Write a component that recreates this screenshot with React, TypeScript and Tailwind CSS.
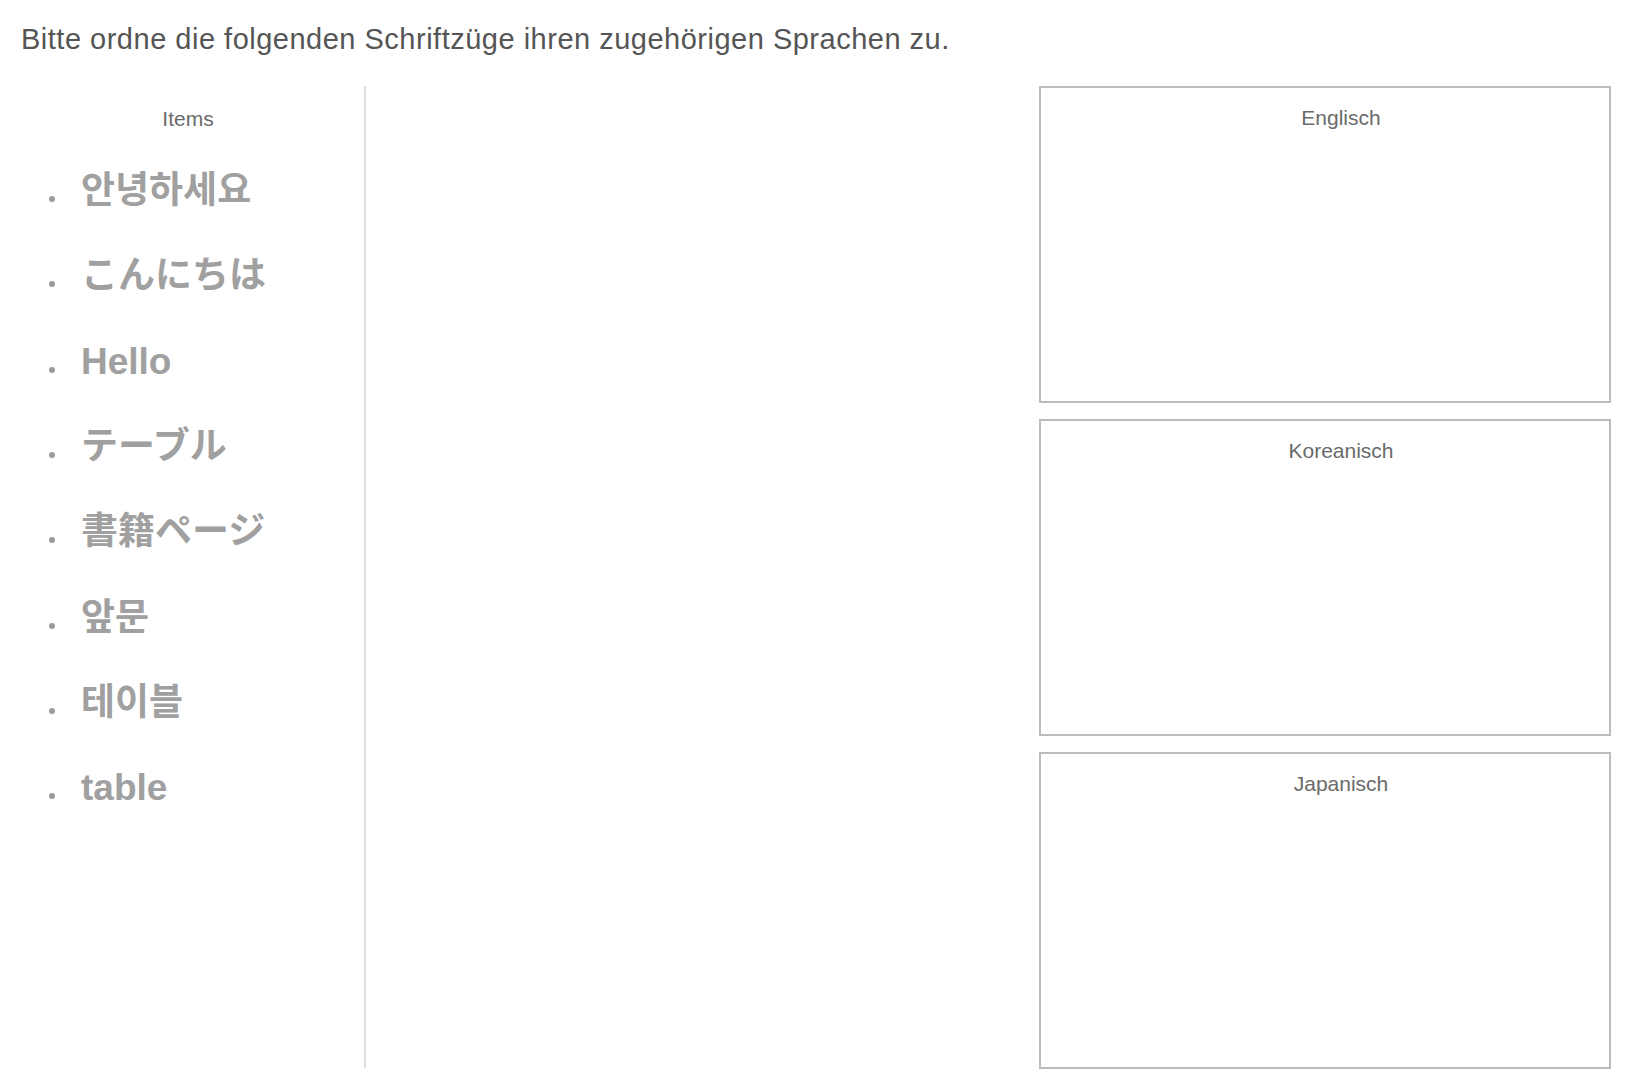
const items = [
  "안녕하세요",
  "こんにちは",
  "Hello",
  "テーブル",
  "書籍ページ",
  "앞문",
  "테이블",
  "table",
];

const groups = ["Englisch", "Koreanisch", "Japanisch"];

export default function App() {
  return (
    <div className="w-[1638px] h-[1088px] bg-white font-['Liberation_Sans','Noto_Sans_CJK_JP',sans-serif] overflow-hidden">
      <div className="pl-[21px] pt-[23px] text-[29px] leading-[32px] tracking-[0.5px] text-[#555555]">
        Bitte ordne die folgenden Schriftzüge ihren zugehörigen Sprachen zu.
      </div>

      <div className="mt-[31px] flex">
        {/* item pool */}
        <div className="w-[366px] h-[982px] border-r-2 border-[#dddddd] pt-[21px]">
          <div className="pl-[12px] text-center text-[21px] leading-[24px] text-[#6a6a6a]">Items</div>
          <ul className="mt-[17px] pl-[49px]">
            {items.map((item) => (
              <li key={item} className="h-[85.33px] text-[37px] leading-[85.33px] font-bold text-[#a0a0a0] whitespace-nowrap">
                <span className="inline-block w-[6px] h-[6px] rounded-full bg-[#9a9a9a] mr-[26px] mb-[1px]" />
                {item}
              </li>
            ))}
          </ul>
        </div>

        <div className="flex-1" />

        {/* drop targets */}
        <div className="mr-[27px] w-[572px] flex flex-col gap-4">
          {groups.map((g) => (
            <div key={g} className="h-[317px] border-2 border-[#bcbcbc] pt-[18px] pl-8">
              <div className="text-center text-[21px] leading-[24px] text-[#6a6a6a]">{g}</div>
            </div>
          ))}
        </div>
      </div>
    </div>
  );
}
